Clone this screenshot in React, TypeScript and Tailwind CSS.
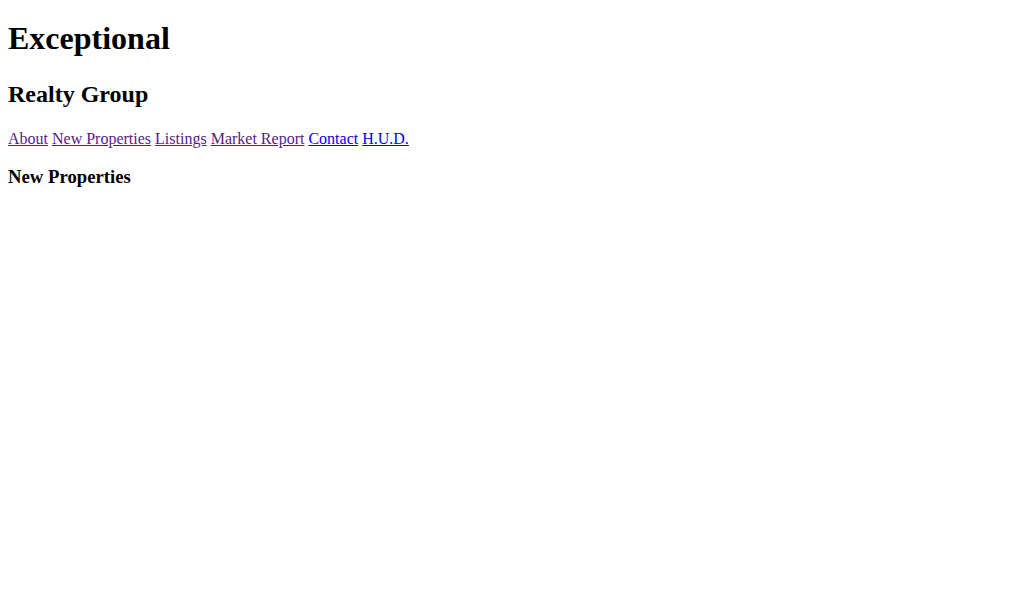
export default function App() {
  const links = [
    { label: "About", visited: true },
    { label: "New Properties", visited: true },
    { label: "Listings", visited: true },
    { label: "Market Report", visited: true },
    { label: "Contact", visited: false },
    { label: "H.U.D.", visited: false },
  ];

  return (
    <div className="mx-2 bg-white text-black font-['Liberation_Serif',serif]">
      <h1 className="text-[32px] leading-[38px] font-bold mt-[19px]">Exceptional</h1>
      <h2 className="text-[24px] leading-[29px] font-bold mt-[23px]">Realty Group</h2>
      <p className="text-[16px] leading-[19px] mt-5">
        {links.map((link, i) => (
          <span key={link.label}>
            <a
              href="#"
              className={`underline ${link.visited ? "text-[#551a8b]" : "text-[#0000ee]"}`}
            >
              {link.label}
            </a>
            {i < links.length - 1 ? " " : ""}
          </span>
        ))}
      </p>
      <h3 className="text-[18.72px] leading-[22px] font-bold mt-[18px] mb-[18.72px]">New Properties</h3>
    </div>
  );
}
